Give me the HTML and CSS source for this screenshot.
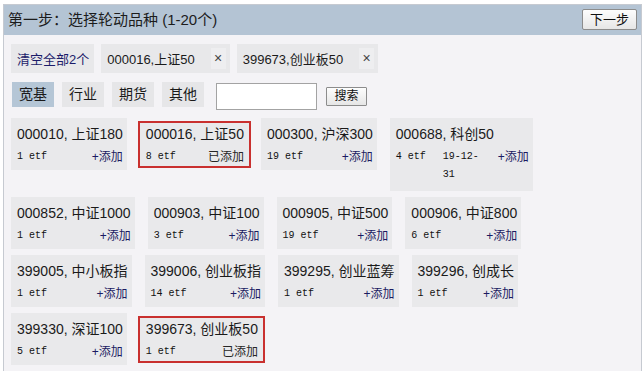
FILE: index.html
```html
<!DOCTYPE html>
<html lang="zh-CN">
<head>
<meta charset="utf-8">
<title>选择轮动品种</title>
<link rel="stylesheet" href="styles.css">
</head>
<body>
<div class="panel">
  <div class="head">
    <span class="title">第一步：选择轮动品种 (1-20个)</span>
    <button class="next" type="button">下一步</button>
  </div>
  <div class="chips">
    <span class="chip clear">清空全部2个</span>
    <span class="chip">000016,上证50<span class="x">×</span></span>
    <span class="chip">399673,创业板50<span class="x">×</span></span>
  </div>
  <div class="tabs">
    <span class="tab on">宽基</span>
    <span class="tab">行业</span>
    <span class="tab">期货</span>
    <span class="tab">其他</span>
    <input class="search-input" type="text">
    <button class="search-btn" type="button">搜索</button>
  </div>
  <div class="cards">
    <div class="card"><div class="name">000010, 上证180</div><div class="meta"><span class="cnt">1 etf</span><span class="act">+添加</span></div></div>
    <div class="card added"><div class="name">000016, 上证50</div><div class="meta"><span class="cnt">8 etf</span><span class="act done">已添加</span></div></div>
    <div class="card"><div class="name">000300, 沪深300</div><div class="meta"><span class="cnt">19 etf</span><span class="act">+添加</span></div></div>
    <div class="card tall"><div class="name">000688, 科创50</div><div class="meta"><span class="cnt">4 etf</span><span class="date">19-12-<wbr>31</span><span class="act">+添加</span></div></div>

    <div class="card"><div class="name">000852, 中证1000</div><div class="meta"><span class="cnt">1 etf</span><span class="act">+添加</span></div></div>
    <div class="card"><div class="name">000903, 中证100</div><div class="meta"><span class="cnt">3 etf</span><span class="act">+添加</span></div></div>
    <div class="card"><div class="name">000905, 中证500</div><div class="meta"><span class="cnt">19 etf</span><span class="act">+添加</span></div></div>
    <div class="card"><div class="name">000906, 中证800</div><div class="meta"><span class="cnt">6 etf</span><span class="act">+添加</span></div></div>

    <div class="card"><div class="name">399005, 中小板指</div><div class="meta"><span class="cnt">1 etf</span><span class="act">+添加</span></div></div>
    <div class="card"><div class="name">399006, 创业板指</div><div class="meta"><span class="cnt">14 etf</span><span class="act">+添加</span></div></div>
    <div class="card"><div class="name">399295, 创业蓝筹</div><div class="meta"><span class="cnt">1 etf</span><span class="act">+添加</span></div></div>
    <div class="card"><div class="name">399296, 创成长</div><div class="meta"><span class="cnt">1 etf</span><span class="act">+添加</span></div></div>

    <div class="card"><div class="name">399330, 深证100</div><div class="meta"><span class="cnt">5 etf</span><span class="act">+添加</span></div></div>
    <div class="card added"><div class="name">399673, 创业板50</div><div class="meta"><span class="cnt">1 etf</span><span class="act done">已添加</span></div></div>
  </div>
</div>
</body>
</html>
```

FILE: styles.css
```css
* { box-sizing: border-box; }

html, body {
  margin: 0;
  padding: 0;
  background: #ffffff;
}

body {
  font-family: "Liberation Sans", "Noto Sans CJK SC", sans-serif;
  color: #1e1e1e;
  overflow: hidden;
}

.panel {
  margin: 4px 2px 0 3px;
  min-height: 367px;
  border: 1px solid #c6cad1;
  border-bottom: none;
  background: #f4f3f6;
}

.head {
  height: 30px;
  background: #b4c4d4;
  display: flex;
  align-items: center;
  justify-content: space-between;
  padding: 0 4px 0 4px;
}

.title {
  font-size: 15px;
  line-height: 30px;
  color: #1c1c1c;
}

.next {
  font-family: "Liberation Sans", "Noto Sans CJK SC", sans-serif;
  font-size: 13px;
  line-height: 19px;
  height: 21px;
  padding: 0 7px;
  margin-top: -1px;
  color: #111;
  border: 1px solid #8c8c8c;
  border-radius: 2px;
  background: linear-gradient(#fdfdfd, #e6e6e6);
}

.chips {
  display: flex;
  gap: 7px;
  margin-top: 9px;
  padding-left: 7px;
}

.chip {
  display: flex;
  align-items: center;
  height: 29px;
  padding: 0 4px 0 6px;
  background: #e8e8ea;
  font-size: 13px;
  color: #1a1a1a;
}

.chip.clear {
  color: #1c1c6a;
  padding-right: 5px;
}

.x {
  display: inline-block;
  width: 15px;
  height: 21px;
  line-height: 21px;
  margin-left: 16px;
  text-align: center;
  font-size: 14px;
  color: #444;
  background: #eeeef0;
}

.tabs {
  display: flex;
  align-items: flex-start;
  height: 28px;
  margin-top: 9px;
  padding-left: 8px;
}

.tab {
  height: 25px;
  line-height: 25px;
  padding: 0 7px;
  margin-right: 8px;
  font-size: 14px;
  background: #e6e6e8;
  color: #1a1a1a;
}

.tab.on {
  background: #b5c6d6;
}

.search-input {
  width: 101px;
  height: 27px;
  margin: 1px 0 0 4px;
  border: 1px solid #a3a3a3;
  background: #fff;
  padding: 0 3px;
}

.search-btn {
  font-family: "Liberation Sans", "Noto Sans CJK SC", sans-serif;
  font-size: 12px;
  line-height: 17px;
  height: 19px;
  width: 41px;
  padding: 0;
  margin: 5px 0 0 9px;
  color: #111;
  border: 1px solid #8c8c8c;
  border-radius: 1px;
  background: linear-gradient(#fdfdfd, #e6e6e6);
}

.cards {
  display: flex;
  flex-wrap: wrap;
  align-items: flex-start;
  column-gap: 13px;
  row-gap: 6px;
  margin-top: 8px;
  padding: 0 20px 0 7px;
}

.card {
  padding: 6px 4px 4px 6px;
  background: #e9e9eb;
}

.card.tall {
  padding-bottom: 7px;
}

.name {
  font-size: 14px;
  line-height: 20px;
  color: #1a1a1a;
  white-space: nowrap;
}

.meta {
  display: flex;
  align-items: flex-start;
  margin-top: 4px;
  line-height: 18px;
}

.cnt {
  font-family: "Liberation Mono", "DejaVu Sans Mono", monospace;
  font-size: 10px;
  color: #111;
  white-space: nowrap;
}

.date {
  font-family: "Liberation Mono", "DejaVu Sans Mono", monospace;
  font-size: 10px;
  color: #111;
  width: 37px;
  margin: 0 18px 0 17px;
}

.act {
  margin-left: auto;
  font-size: 12px;
  color: #1b1b62;
  white-space: nowrap;
}

.act.done {
  color: #262626;
}

.card.added {
  margin: 3px -3px 0 -2px;
  padding: 1px 5px 0 6px;
  border: 2px solid #c9302f;
}
```
